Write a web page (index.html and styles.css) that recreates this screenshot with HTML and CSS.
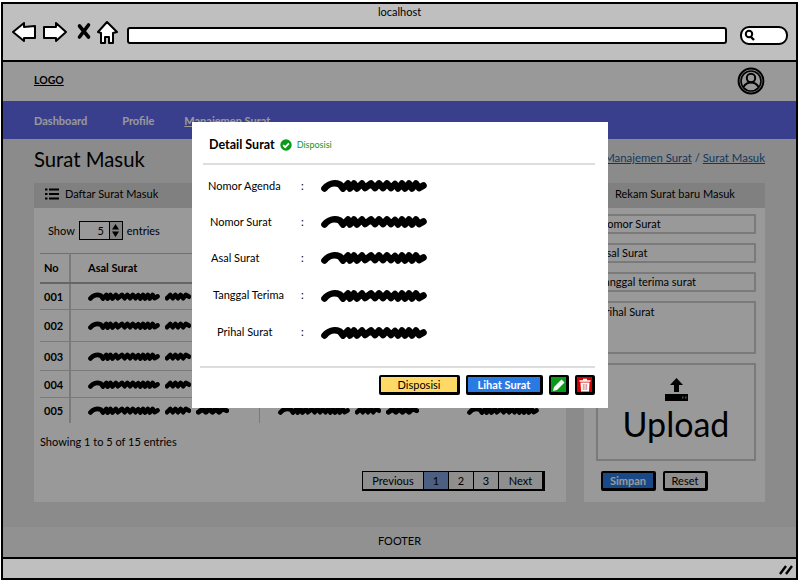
FILE: index.html
```html
<!DOCTYPE html>
<html>
<head>
<meta charset="utf-8">
<title>Surat Masuk</title>
<link rel="stylesheet" href="styles.css">
</head>
<body>
<svg class="defs" width="0" height="0">
  <symbol id="scribble" viewBox="0 0 106 14" preserveAspectRatio="none">
    <path d="M3.500 10.500 C7 6 13 4 19 6.500 L22 10.500 L27 5.500 L29 10.500 L33 5.500 L36 10.500 L41 5.500 L44 10 L50 5.500 L54 10 L58 5.500 L62 10 L66 5.500 L70 10 L74 6 L77 10.500 L81 5.500 L84 10.500 L88 5.500 L91 10.500 L95 5.500 L98 10 L102.500 7.500" fill="none" stroke="#000" stroke-width="6.600" stroke-linecap="round" stroke-linejoin="round"/>
  </symbol>
  <symbol id="scribble-short" viewBox="0 0 40 14" preserveAspectRatio="none">
    <path d="M3 10 L8 5.500 L12 10 L16 5.500 L20 10 L24 5.500 L28 10 L32 5.500 L37 8" fill="none" stroke="#000" stroke-width="6.600" stroke-linecap="round" stroke-linejoin="round"/>
  </symbol>
</svg>

<div class="window">
  <div class="chrome">
    <div class="chrome-title">localhost</div>
    <div class="toolbar">
      <svg class="tool-icons" width="108" height="24" viewBox="0 0 108 24">
        <path d="M2 11 L13 2 L13 6 L24 5 L24 17 L13 17 L13 20 Z" fill="#fff" stroke="#000" stroke-width="2" stroke-linejoin="round"/>
        <path d="M55 11 L45 2 L45 6 L33 6 L33 17 L45 17 L45 20 Z" fill="#fff" stroke="#000" stroke-width="2" stroke-linejoin="round"/>
        <path d="M68.500 5 L77.500 16 M77.500 4 L68.500 16" fill="none" stroke="#000" stroke-width="3.600" stroke-linecap="round"/>
        <path d="M87 11 L96 1 L106 11 L102 12 L102 22 L98 22 L98 16 L94 16 L94 22 L90 22 L90 12 Z" fill="#fff" stroke="#000" stroke-width="2" stroke-linejoin="round"/>
      </svg>
      <div class="url-bar"></div>
      <div class="search-box">
        <svg width="12" height="12" viewBox="0 0 12 12"><circle cx="5" cy="5" r="3.2" fill="none" stroke="#000" stroke-width="2"/><path d="M7 8 L10 11" stroke="#000" stroke-width="2.4"/></svg>
      </div>
    </div>
  </div>

  <div class="page">
    <div class="header">
      <span class="logo">LOGO</span>
      <svg class="avatar" width="28" height="28" viewBox="0 0 28 28">
        <circle cx="14" cy="14" r="12.4" fill="none" stroke="#000" stroke-width="2"/>
        <circle cx="14" cy="14" r="10" fill="none" stroke="#000" stroke-width="1.6"/>
        <circle cx="14" cy="11" r="4.2" fill="none" stroke="#000" stroke-width="2"/>
        <path d="M6.5 20 Q9 15.5 14 15.5 Q19 15.5 21.5 20" fill="none" stroke="#000" stroke-width="2"/>
      </svg>
    </div>
    <div class="nav">
      <a>Dashboard</a>
      <a class="nav-profile">Profile</a>
      <a class="active">Manajemen Surat</a>
    </div>
    <div class="content">
      <div class="title-row">
        <h1>Surat Masuk</h1>
        <div class="crumbs"><u>Dashboard</u> / <u>Manajemen Surat</u> / <u>Surat Masuk</u></div>
      </div>
      <div class="columns">
        <div class="card card-list">
          <div class="card-head">
            <svg width="14" height="12" viewBox="0 0 14 12"><path d="M0 1.5H2.5M4 1.5H14M0 6H2.5M4 6H14M0 10.500H2.5M4 10.500H14" stroke="#000" stroke-width="2"/></svg>
            Daftar Surat Masuk
          </div>
          <div class="card-body">
            <div class="entries">
              Show
              <span class="spinner"><span class="spin-val">5</span><span class="spin-btn">
                <svg width="9" height="15" viewBox="0 0 9 15"><path d="M4.500 1 L8 6.500 H1 Z M4.500 14 L8 8.500 H1 Z" fill="#000"/></svg>
              </span></span>
              entries
            </div>
            <table class="data">
              <tr class="row-head"><th class="c-no">No</th><th class="c-a">Asal Surat</th><th class="c-b"></th><th></th></tr>
              <tr class="r1"><td class="c-no">001</td><td class="c-a"><svg class="s-a"><use href="#scribble"/></svg><svg class="s-b"><use href="#scribble-short"/></svg><svg class="s-c"><use href="#scribble-short"/></svg></td><td></td><td></td></tr>
              <tr class="r2"><td class="c-no">002</td><td class="c-a"><svg class="s-a"><use href="#scribble"/></svg><svg class="s-b"><use href="#scribble-short"/></svg><svg class="s-c"><use href="#scribble-short"/></svg></td><td></td><td></td></tr>
              <tr class="r3"><td class="c-no">003</td><td class="c-a"><svg class="s-a"><use href="#scribble"/></svg><svg class="s-b"><use href="#scribble-short"/></svg><svg class="s-c"><use href="#scribble-short"/></svg></td><td></td><td></td></tr>
              <tr class="r4"><td class="c-no">004</td><td class="c-a"><svg class="s-a"><use href="#scribble"/></svg><svg class="s-b"><use href="#scribble-short"/></svg><svg class="s-c"><use href="#scribble-short"/></svg></td><td></td><td></td></tr>
              <tr class="r5"><td class="c-no">005</td><td class="c-a"><svg class="s-a"><use href="#scribble"/></svg><svg class="s-b"><use href="#scribble-short"/></svg><svg class="s-c"><use href="#scribble-short"/></svg></td><td class="c-b"><svg class="s-a"><use href="#scribble"/></svg><svg class="s-b"><use href="#scribble-short"/></svg><svg class="s-c"><use href="#scribble-short"/></svg></td><td><svg class="s-a"><use href="#scribble"/></svg></td></tr>
            </table>
            <div class="showing">Showing 1 to 5 of 15 entries</div>
            <div class="pager-row">
              <div class="pager"><span class="pg-text">Previous</span><span class="pg-num current">1</span><span class="pg-num">2</span><span class="pg-num">3</span><span class="pg-next">Next</span></div>
            </div>
          </div>
        </div>

        <div class="card card-form">
          <div class="card-head card-head-form">Rekam Surat baru Masuk</div>
          <div class="form">
            <div class="field">Nomor Surat</div>
            <div class="field">Asal Surat</div>
            <div class="field">Tanggal terima surat</div>
            <div class="field field-area">Prihal Surat</div>
            <div class="upload">
              <svg width="25" height="25" viewBox="0 0 25 25"><path d="M12.500 1 L19 8 H15 V15 H10 V8 H6 Z M1 17 H24 V24 H1 Z" fill="#000"/><path d="M18 20.500H19.500M21 20.500H22.500" stroke="#888" stroke-width="2"/></svg>
              <span class="upload-text">Upload</span>
            </div>
            <div class="form-btns">
              <span class="btn btn-save">Simpan</span>
              <span class="btn btn-reset">Reset</span>
            </div>
          </div>
        </div>
      </div>
    </div>
    <div class="footer">FOOTER</div>

    <div class="overlay"></div>
    <div class="modal">
      <div class="modal-head">
        <strong>Detail Surat</strong>
        <svg width="12" height="12" viewBox="0 0 12 12"><circle cx="6" cy="6" r="5.700" fill="#0a9a1a"/><path d="M3.200 6.200 L5.200 8.200 L8.900 4.300" fill="none" stroke="#fff" stroke-width="1.800"/></svg>
        <span class="status">Disposisi</span>
      </div>
      <div class="modal-rows">
        <div class="m-row r-agenda"><span class="m-label">Nomor Agenda</span><span class="m-colon">:</span><svg class="m-scribble"><use href="#scribble"/></svg></div>
        <div class="m-row r-nomor"><span class="m-label">Nomor Surat</span><span class="m-colon">:</span><svg class="m-scribble"><use href="#scribble"/></svg></div>
        <div class="m-row r-asal"><span class="m-label">Asal Surat</span><span class="m-colon">:</span><svg class="m-scribble"><use href="#scribble"/></svg></div>
        <div class="m-row r-tanggal"><span class="m-label">Tanggal Terima</span><span class="m-colon">:</span><svg class="m-scribble"><use href="#scribble"/></svg></div>
        <div class="m-row r-prihal"><span class="m-label">Prihal Surat</span><span class="m-colon">:</span><svg class="m-scribble"><use href="#scribble"/></svg></div>
      </div>
      <div class="modal-foot">
        <span class="btn btn-disposisi">Disposisi</span>
        <span class="btn btn-lihat">Lihat Surat</span>
        <span class="btn btn-icon btn-edit">
          <svg width="14" height="14" viewBox="0 0 14 14"><path d="M1 13 L2 9 L9.500 1.500 L12.500 4.500 L5 12 Z" fill="#fff"/></svg>
        </span>
        <span class="btn btn-icon btn-del">
          <svg width="12" height="14" viewBox="0 0 12 14"><path d="M4 1.500 H8 M0.500 3 H11.500" stroke="#fff" stroke-width="1.500"/><path d="M1.500 4.500 H10.500 L10 13.500 H2 Z" fill="#fff"/><path d="M4.300 6 V12 M6 6 V12 M7.700 6 V12" stroke="#d98080" stroke-width="0.900"/></svg>
        </span>
      </div>
    </div>
  </div>

  <div class="status-bar">
    <svg width="14" height="12" viewBox="0 0 14 12"><path d="M1 11 L7 3 M7 11 L13 3" stroke="#000" stroke-width="2.400"/></svg>
  </div>
</div>
</body>
</html>
```

FILE: styles.css
```css
body
{
  margin:0;
  padding:2px 5px 5px 1px;
  background-color:#fff;
  font-family:"Lato","Noto Sans",sans-serif;
  color:#000;
}

.defs
{
  position:absolute;
}

.window
{
  width:793px;
  height:574px;
  border:2px solid #000;
  display:flex;
  flex-direction:column;
  background-color:#bfbfbf;
}

/* browser frame */
.chrome
{
  height:56px;
  flex:none;
  border-bottom:2px solid #000;
}

.chrome-title
{
  font-size:11px;
  text-align:center;
  padding-top:1px;
  height:15px;
  line-height:14px;
}

.toolbar
{
  display:flex;
  align-items:center;
  padding-left:8px;
  margin-top:1px;
}

.tool-icons
{
  flex:none;
}

.url-bar
{
  width:596px;
  height:13px;
  margin-left:8px;
  margin-top:4px;
  background-color:#fff;
  border:2px solid #000;
  border-radius:3px;
}

.search-box
{
  width:42px;
  height:15px;
  margin-left:13px;
  margin-top:4px;
  padding-left:2px;
  display:flex;
  align-items:center;
  background-color:#fff;
  border:2px solid #000;
  border-radius:9px;
}

.status-bar
{
  height:19px;
  flex:none;
  border-top:2px solid #000;
  display:flex;
  justify-content:flex-end;
  align-items:center;
  padding-right:3px;
}

/* page */
.page
{
  flex:1;
  position:relative;
  display:flex;
  flex-direction:column;
  background-color:#e8e8e8;
  overflow:hidden;
}

.header
{
  height:39px;
  box-sizing:border-box;
  flex:none;
  background-color:#fff;
  display:flex;
  align-items:center;
  justify-content:space-between;
  padding:0 31px 1px;
}

.logo
{
  font-size:10.500px;
  font-weight:bold;
  text-decoration:underline;
  margin-bottom:2px;
}

.nav
{
  height:38px;
  flex:none;
  background-color:#616aec;
  display:flex;
  align-items:center;
  padding:0 0 0 31px;
  font-size:11px;
  font-weight:bold;
  color:#fff;
  box-sizing:border-box;
}

.nav a
{
  margin-right:35px;
}

.nav a.nav-profile
{
  margin-right:30px;
}

.nav a.active
{
  text-decoration:underline;
}

.content
{
  flex:1;
  padding:0 31px;
  min-height:0;
}

.title-row
{
  height:44px;
  display:flex;
  justify-content:space-between;
  align-items:center;
}

h1
{
  font-size:20.300px;
  font-weight:normal;
  margin:0;
  padding-bottom:4px;
}

.crumbs
{
  font-size:11.400px;
  color:#1d5fa0;
  margin-bottom:7px;
}

.columns
{
  display:flex;
  gap:18px;
}

.card
{
  background-color:#fff;
  height:319px;
}

.card-list
{
  width:532px;
}

.card-form
{
  width:182px;
}

.card-head
{
  height:25px;
  box-sizing:border-box;
  padding:0 0 4px 11px;
  background-color:#d6d6d6;
  display:flex;
  align-items:center;
  gap:6px;
  font-size:11px;
}

.card-head-form
{
  padding-left:31px;
}

.card-body
{
  padding:0 6px;
}

.entries
{
  height:45px;
  display:flex;
  align-items:center;
  gap:4px;
  font-size:11px;
  padding-left:8px;
}

.spinner
{
  display:flex;
  width:42px;
  height:17px;
  border:1.500px solid #000;
}

.spin-val
{
  flex:1;
  text-align:right;
  padding-right:5px;
  line-height:17px;
}

.spin-btn
{
  width:12px;
  display:flex;
  justify-content:center;
  align-items:center;
  border-left:1px solid #000;
  background-color:#ddd;
}

table.data
{
  border-collapse:collapse;
  width:520px;
  font-size:11px;
  border-top:1px solid #bbb;
}

table.data th, table.data td
{
  padding:0;
  text-align:left;
  vertical-align:middle;
  border-bottom:1px solid #ccc;
}

table.data tr:last-child td
{
  border-bottom:none;
}

.row-head
{
  height:29px;
}

.row-head th
{
  border-bottom:2px solid #aaa !important;
}

.c-no
{
  width:30px;
  padding-left:4px !important;
  font-weight:bold;
  border-right:2px solid #ccc;
  box-sizing:border-box;
}

.c-a
{
  width:189px;
  padding-left:17px !important;
  box-sizing:border-box;
  white-space:nowrap;
}

.c-b
{
  width:190px;
  padding-left:18px !important;
  box-sizing:border-box;
  border-left:1px solid #ccc;
  white-space:nowrap;
}

td:last-child svg
{
  margin-left:18px;
}

.r1 { height:27px; }
.r2 { height:32px; }
.r3 { height:29px; }
.r4 { height:27px; }
.r5 { height:25px; }

.r1 td { padding-bottom:1px; }
.r2 td, .r3 td { padding-bottom:4px; }

.s-a { width:72px; height:10px; }
.s-b { width:26px; height:10px; margin-left:5px; }
.s-c { width:33px; height:10px; margin-left:5px; }

.showing
{
  font-size:11px;
  padding-top:12px;
  line-height:14px;
  height:14px;
}

.pager-row
{
  display:flex;
  justify-content:flex-end;
  padding:22px 15px 0 0;
}

.pager
{
  display:flex;
  height:17px;
  border:1.500px solid #000;
  border-right-width:3px;
  border-bottom-width:2px;
  font-size:11px;
  line-height:17px;
  text-align:center;
  background-color:#eee;
}

.pg-text { width:60px; }
.pg-num { width:25px; box-sizing:border-box; border-left:1px solid #000; }
.pg-next { width:44px; box-sizing:border-box; border-left:1px solid #000; }
.pg-num.current { background-color:#7f9fd8; }

/* form */
.form
{
  padding:6px 9px 0 12px;
  display:flex;
  flex-direction:column;
  font-size:11px;
}

.field
{
  height:20px;
  line-height:16px;
  box-sizing:border-box;
  border:2px solid #ccc;
  padding-left:1px;
  margin-bottom:9px;
  border-radius:1px;
}

.field-area
{
  height:53px;
  line-height:16px;
  padding-top:1px;
}

.upload
{
  height:98px;
  box-sizing:border-box;
  border:2px solid #ccc;
  display:flex;
  flex-direction:column;
  align-items:center;
  padding-top:12px;
}

.upload-text
{
  font-size:34px;
  line-height:44px;
}

.form-btns
{
  display:flex;
  gap:7px;
  padding:10px 0 0 5px;
}

/* buttons */
.btn
{
  display:inline-flex;
  align-items:center;
  justify-content:center;
  box-sizing:border-box;
  border:2px solid #000;
  border-right-width:3px;
  border-bottom-width:3px;
  border-radius:2px;
  height:20px;
  font-size:11px;
}

.btn-save
{
  width:55px;
  background-color:#2a7ae4;
  color:#fff;
  font-weight:bold;
}

.btn-reset
{
  width:45px;
  background-color:#eee;
}

.btn-disposisi
{
  width:81px;
  background-color:#ffd966;
}

.btn-lihat
{
  width:77px;
  background-color:#2a7ae4;
  color:#fff;
  font-weight:bold;
}

.btn-icon
{
  width:20px;
}

.btn-edit
{
  background-color:#0a9a1a;
}

.btn-del
{
  background-color:#d40000;
}

/* modal */
.overlay
{
  position:absolute;
  top:0;
  left:0;
  right:0;
  bottom:0;
  background-color:rgba(0,0,0,0.4);
}

.modal
{
  position:absolute;
  left:189px;
  top:60px;
  width:416px;
  height:286px;
  background-color:#fff;
  box-sizing:border-box;
  font-size:11px;
}

.modal-head
{
  height:37px;
  padding:4px 0 0 6px;
  margin:0 13px 0 11px;
  display:flex;
  align-items:center;
  gap:5px;
  border-bottom:2px solid #ddd;
}

.modal-head strong
{
  font-size:12.500px;
}

.status
{
  font-size:9px;
  color:#0a9a1a;
}

.modal-rows
{
  height:201px;
  padding-top:2px;
  box-sizing:border-box;
}

.m-row
{
  height:36px;
  display:flex;
  align-items:center;
}

.m-label
{
  width:93px;
}

.m-colon
{
  width:20px;
}

.m-scribble
{
  width:106px;
  height:14px;
}

.r-agenda { padding-left:16px; }
.r-nomor { padding-left:18px; }
.r-nomor .m-label { width:91px; }
.r-asal { padding-left:19px; }
.r-asal .m-label { width:90px; }
.r-tanggal { padding-left:21px; height:39px; }
.r-tanggal .m-label { width:88px; }
.r-prihal { padding-left:25px; height:35px; }
.r-prihal .m-label { width:84px; }

.modal-foot
{
  margin:0 13px 0 8px;
  padding-top:7px;
  border-top:2px solid #ddd;
  display:flex;
  justify-content:flex-end;
  gap:6px;
}

.footer
{
  height:30px;
  flex:none;
  background-color:#f2f2f2;
  font-size:11px;
  text-align:center;
  line-height:27px;
}
```
